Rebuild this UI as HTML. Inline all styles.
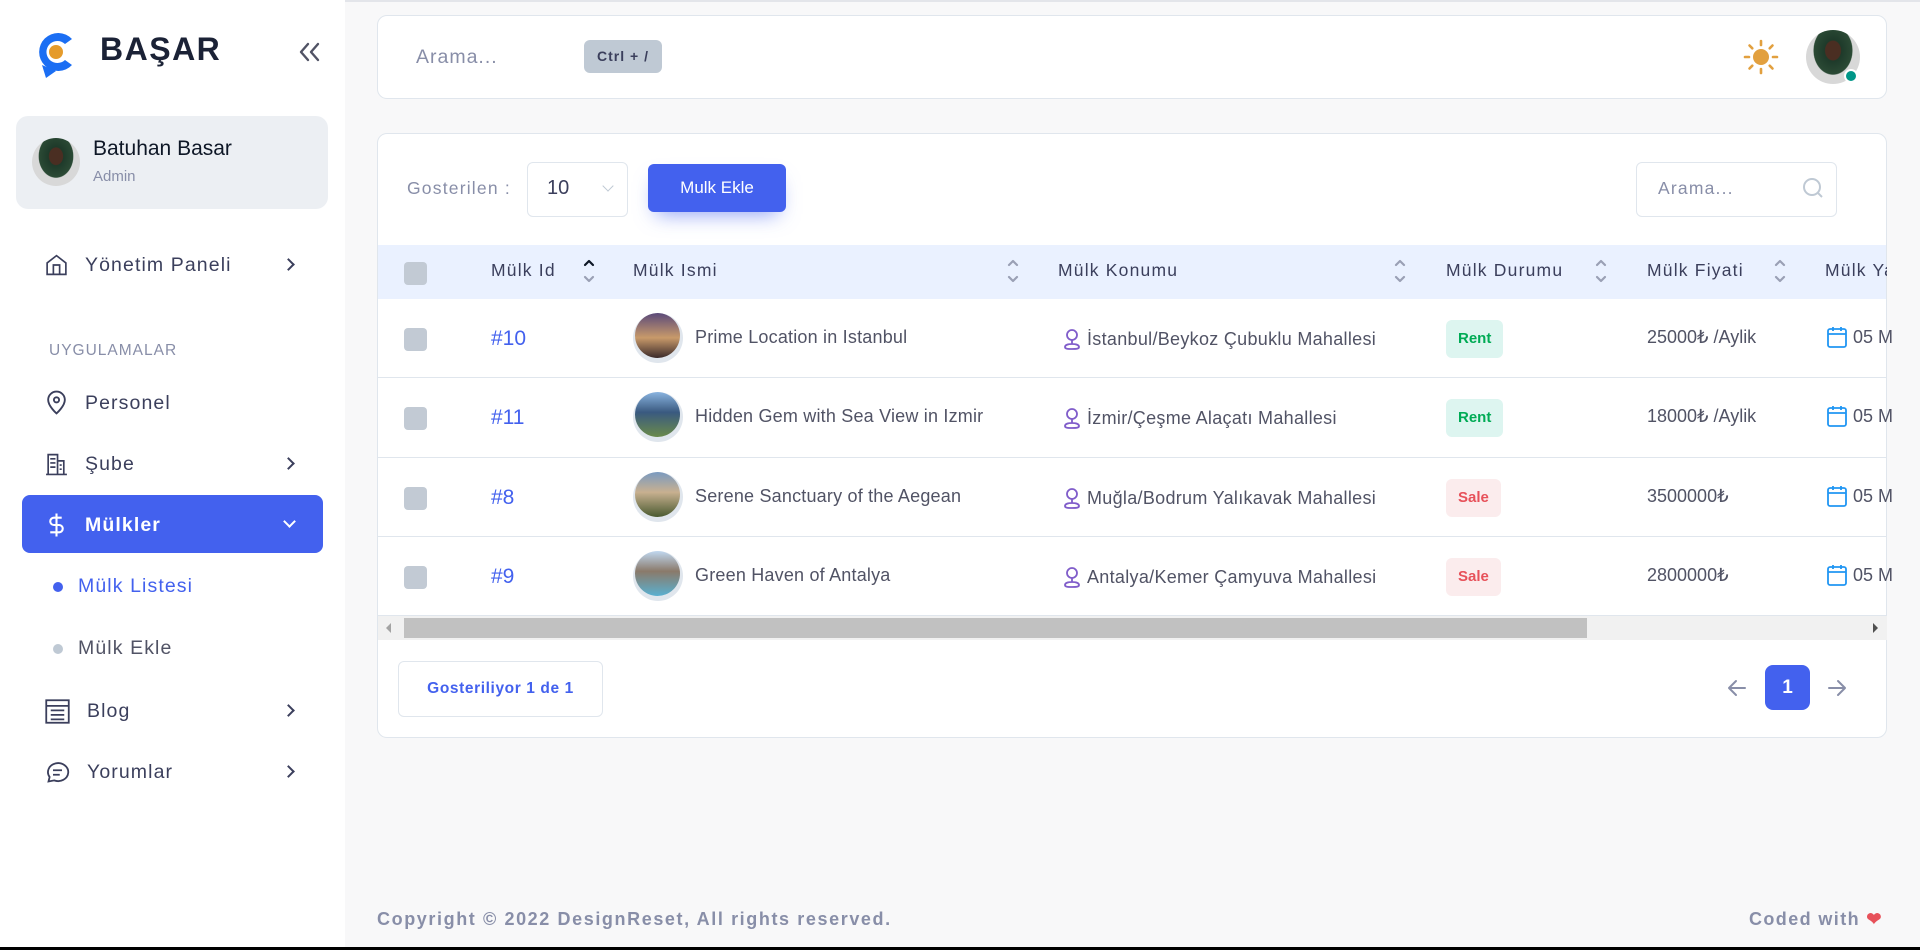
<!DOCTYPE html>
<html><head><meta charset="utf-8"><style>
*{box-sizing:border-box;margin:0;padding:0}
body{width:1920px;height:950px;overflow:hidden;background:#f8f8f9;font-family:"Liberation Sans",sans-serif;position:relative;color:#3b3f5c}
.a{position:absolute}
.sb{left:0;top:0;width:345px;height:950px;background:#fff}
.mi{position:absolute;left:44px;font-size:19.5px;letter-spacing:1.1px;color:#3b3f5c;display:flex;align-items:center}
.mi svg{margin-right:16px}
.chev{position:absolute;left:284px;width:9px;height:9px;border-right:2px solid #3b3f5c;border-top:2px solid #3b3f5c;transform:rotate(45deg)}
.card{background:#fff;border:1px solid #e0e6ed;border-radius:10px}
.th{font-size:17.5px;letter-spacing:1.2px;color:#3b3f5c;top:260px}
.srt{position:absolute;top:256px}
.cb{width:23px;height:23px;background:#c2cad4;border-radius:4px;left:404px}
.id{left:491px;font-size:21px;color:#4361ee}
.nm{left:695px;font-size:18px;color:#515365;letter-spacing:.2px}
.loc{left:1060px;font-size:18px;color:#515365;display:flex;align-items:center;letter-spacing:.3px}
.pr{left:1647px;font-size:18px;color:#515365}
.img{left:633px;width:50px;height:50px;border-radius:50%;background:#e0e6ed;overflow:hidden}
.img div{width:45px;height:45px;border-radius:50%;margin:0 2px}
.badge{left:1446px;height:38px;border-radius:6px;padding:0 12px;font-size:15px;font-weight:bold;line-height:38px}
.rent{background:#ddf5f0;color:#00ab55}
.sale{background:#fbeced;color:#e7515a}
.rb{left:378px;width:1509px;height:1px;background:#e0e6ed}
.cal{left:1827px;font-size:18px;color:#515365;display:flex;align-items:center}
</style></head><body>
<div class="a" style="left:0;top:0;width:1920px;height:2px;background:#e3e5ea"></div>
<div class="a sb">
 <svg class="a" style="left:32px;top:27px" width="46" height="52" viewBox="0 0 46 52"><path d="M40 12 A19 19 0 1 0 40 38 L33 33 A11 11 0 1 1 33 17 Z" fill="#1b6ef3"/><path d="M10 38 L14 51 L24 44 Z" fill="#1b6ef3"/><circle cx="24" cy="25" r="7" fill="#e59b2b"/></svg>
 <div class="a" style="left:100px;top:31px;font-size:32px;font-weight:bold;letter-spacing:1.5px;color:#1b2236">BAŞAR</div>
 <svg class="a" style="left:298px;top:42px" width="24" height="20" viewBox="0 0 24 20" fill="none" stroke="#515365" stroke-width="2.4" stroke-linecap="round" stroke-linejoin="round"><path d="M10 2L3 10l7 8M20 2l-7 8 7 8"/></svg>
 <div class="a" style="left:16px;top:116px;width:312px;height:93px;background:#eceff3;border-radius:12px"></div>
 <div class="a" style="left:32px;top:138px;width:48px;height:48px;border-radius:50%;background:radial-gradient(ellipse at 50% 38%,#4a2e22 0 20%,#1e3a2a 22%,#2b4a35 50%,#d8d8d8 52%)"></div>
 <div class="a" style="left:93px;top:137px;font-size:21px;color:#0e1726">Batuhan Basar</div>
 <div class="a" style="left:93px;top:168px;font-size:15px;color:#888ea8">Admin</div>
 <div class="mi" style="top:252px"><svg width="25" height="26" viewBox="0 0 24 24" fill="none" stroke="#3b3f5c" stroke-width="1.6"><path d="M3 10l9-7 9 7v11H3z"/><path d="M9 21v-9h6v9"/></svg>Yönetim Paneli</div>
 <div class="chev" style="top:260px"></div>
 <div class="a" style="left:49px;top:342px;font-size:15.5px;letter-spacing:1px;color:#888ea8">UYGULAMALAR</div>
 <div class="mi" style="top:390px"><svg width="25" height="26" viewBox="0 0 24 24" fill="none" stroke="#3b3f5c" stroke-width="1.8"><path d="M12 22s-8-7-8-13a8 8 0 0 1 16 0c0 6-8 13-8 13z"/><circle cx="12" cy="9" r="2.5"/></svg>Personel</div>
 <div class="mi" style="top:451px"><svg width="25" height="26" viewBox="0 0 24 24" fill="none" stroke="#3b3f5c" stroke-width="1.6"><path d="M2 22h20M4 22V3h9v19M13 9h6v13M6 7h5M6 11h5M6 15h5M15 13h2M15 17h2"/></svg>Şube</div>
 <div class="chev" style="top:459px"></div>
 <div class="a" style="left:22px;top:495px;width:301px;height:58px;background:#4361ee;border-radius:8px"></div>
 <div class="mi" style="top:511px;color:#fff;font-weight:bold"><svg width="25" height="28" viewBox="0 0 24 24" fill="none" stroke="#fff" stroke-width="2"><path d="M12 1v22M17 5H9.5a3.5 3.5 0 0 0 0 7h5a3.5 3.5 0 0 1 0 7H6"/></svg>Mülkler</div>
 <div class="a" style="left:285px;top:517px;width:9px;height:9px;border-right:2px solid #fff;border-bottom:2px solid #fff;transform:rotate(45deg)"></div>
 <div class="a" style="left:53px;top:582px;width:10px;height:10px;border-radius:50%;background:#4361ee"></div>
 <div class="a" style="left:78px;top:575px;font-size:19.5px;letter-spacing:1.1px;color:#4361ee">Mülk Listesi</div>
 <div class="a" style="left:53px;top:644px;width:10px;height:10px;border-radius:50%;background:#bfc9d4"></div>
 <div class="a" style="left:78px;top:637px;font-size:19.5px;letter-spacing:1.1px;color:#515365">Mülk Ekle</div>
 <div class="mi" style="top:698px"><svg width="27" height="27" viewBox="0 0 24 24" fill="none" stroke="#3b3f5c" stroke-width="1.6"><rect x="2" y="2" width="20" height="20"/><path d="M2 7h20M6 11h12M6 15h12M6 19h12"/></svg>Blog</div>
 <div class="chev" style="top:706px"></div>
 <div class="mi" style="top:759px"><svg width="27" height="27" viewBox="0 0 24 24" fill="none" stroke="#3b3f5c" stroke-width="1.6"><path d="M4 20l1-4A9 8 0 1 1 9 19z"/><path d="M8 10h8M8 14h6"/></svg>Yorumlar</div>
 <div class="chev" style="top:767px"></div>
</div>
<!-- header -->
<div class="a card" style="left:377px;top:15px;width:1510px;height:84px"></div>
<div class="a" style="left:416px;top:46px;font-size:19.5px;letter-spacing:1px;color:#888ea8">Arama...</div>
<div class="a" style="left:584px;top:40px;width:78px;height:33px;background:#bfc9d4;border-radius:6px;font-size:14px;font-weight:bold;color:#3b3f5c;line-height:33px;text-align:center;letter-spacing:1px">Ctrl + /</div>
<svg class="a" style="left:1743px;top:39px" width="36" height="36" viewBox="0 0 36 36"><circle cx="18" cy="18" r="8" fill="#e2a03f"/><g stroke="#e2a03f" stroke-width="2.6" stroke-linecap="round"><path d="M18 2v4M18 30v4M2 18h4M30 18h4M6.5 6.5l2.8 2.8M26.7 26.7l2.8 2.8M6.5 29.5l2.8-2.8M26.7 9.3l2.8-2.8"/></g></svg>
<div class="a" style="left:1806px;top:30px;width:54px;height:54px;border-radius:50%;background:radial-gradient(ellipse at 50% 38%,#4a2e22 0 20%,#1e3a2a 22%,#2b4a35 50%,#d8d8d8 52%)"></div>
<div class="a" style="left:1844px;top:69px;width:14px;height:14px;border-radius:50%;background:#009688;border:2px solid #fff"></div>
<!-- table card -->
<div class="a card" style="left:377px;top:133px;width:1510px;height:605px;overflow:hidden">
 <div class="a" style="left:0;top:111px;width:1510px;height:54px;background:#eaf1ff"></div>
</div>
<div class="a" style="left:407px;top:178px;font-size:17.5px;letter-spacing:1.2px;color:#888ea8">Gosterilen :</div>
<div class="a" style="left:527px;top:162px;width:101px;height:55px;border:1px solid #e0e6ed;border-radius:6px"></div>
<div class="a" style="left:547px;top:177px;font-size:20px;color:#3b3f5c">10</div>
<div class="a" style="left:604px;top:182px;width:8px;height:8px;border-right:1px solid #bfc9d4;border-bottom:1px solid #bfc9d4;transform:rotate(45deg)"></div>
<div class="a" style="left:648px;top:164px;width:138px;height:48px;background:#4361ee;border-radius:6px;color:#fff;font-size:17px;line-height:48px;text-align:center;box-shadow:0 10px 20px -8px rgba(67,97,238,.6)">Mulk Ekle</div>
<div class="a" style="left:1636px;top:162px;width:201px;height:55px;border:1px solid #e0e6ed;border-radius:6px"></div>
<div class="a" style="left:1658px;top:178px;font-size:17.5px;letter-spacing:1.2px;color:#888ea8">Arama...</div>
<svg class="a" style="left:1801px;top:176px" width="24" height="24" viewBox="0 0 24 24" fill="none" stroke="#bfc9d4" stroke-width="2"><circle cx="11" cy="11" r="8"/><path d="M21 21l-4.3-4.3"/></svg>
<div class="a cb" style="top:262px"></div>
<div class="a th" style="left:491px">Mülk Id</div>
<svg class="srt" style="left:582px" width="14" height="30" viewBox="0 0 14 30" fill="none" stroke-width="2.2" stroke-linecap="round" stroke-linejoin="round"><path d="M3 9l4-4 4 4" stroke="#0e1726"/><path d="M3 21l4 4 4-4" stroke="#9aa0b5"/></svg>
<div class="a th" style="left:633px">Mülk Ismi</div>
<svg class="srt" style="left:1006px" width="14" height="30" viewBox="0 0 14 30" fill="none" stroke="#9aa0b5" stroke-width="2.2" stroke-linecap="round" stroke-linejoin="round"><path d="M3 9l4-4 4 4M3 21l4 4 4-4"/></svg>
<div class="a th" style="left:1058px">Mülk Konumu</div>
<svg class="srt" style="left:1393px" width="14" height="30" viewBox="0 0 14 30" fill="none" stroke="#9aa0b5" stroke-width="2.2" stroke-linecap="round" stroke-linejoin="round"><path d="M3 9l4-4 4 4M3 21l4 4 4-4"/></svg>
<div class="a th" style="left:1446px">Mülk Durumu</div>
<svg class="srt" style="left:1594px" width="14" height="30" viewBox="0 0 14 30" fill="none" stroke="#9aa0b5" stroke-width="2.2" stroke-linecap="round" stroke-linejoin="round"><path d="M3 9l4-4 4 4M3 21l4 4 4-4"/></svg>
<div class="a th" style="left:1647px">Mülk Fiyati</div>
<svg class="srt" style="left:1773px" width="14" height="30" viewBox="0 0 14 30" fill="none" stroke="#9aa0b5" stroke-width="2.2" stroke-linecap="round" stroke-linejoin="round"><path d="M3 9l4-4 4 4M3 21l4 4 4-4"/></svg>
<div class="a th" style="left:1825px;width:62px;overflow:hidden;white-space:nowrap">Mülk Yayın</div>

<!-- rows -->
<div class="a cb" style="top:328px"></div><div class="a id" style="top:327px">#10</div>
<div class="a img" style="top:313px"><div style="background:linear-gradient(#5b4a7a,#c89a6a 55%,#3a2a2a)"></div></div>
<div class="a nm" style="top:327px">Prime Location in Istanbul</div>
<div class="a loc" style="top:327px"><svg width="24" height="24" viewBox="0 0 24 24" fill="none" stroke="#805dca" stroke-width="1.8"><circle cx="12" cy="8" r="5"/><path d="M12 13v4M5 20c0-2 3-3 7-3s7 1 7 3-3 2-7 2-7 0-7-2z"/></svg><span style="margin-left:3px">İstanbul/Beykoz Çubuklu Mahallesi</span></div>
<div class="a badge rent" style="top:320px">Rent</div>
<div class="a pr" style="top:327px">25000₺ /Aylik</div>
<div class="a cal" style="top:326px"><svg width="20" height="22" viewBox="0 0 20 22" fill="none" stroke="#2196f3" stroke-width="1.8"><rect x="1" y="3" width="18" height="18" rx="2"/><path d="M1 8h18M6 1v4M14 1v4"/></svg><span style="margin-left:6px">05 M</span></div>
<div class="a rb" style="top:377px"></div>

<div class="a cb" style="top:407px"></div><div class="a id" style="top:406px">#11</div>
<div class="a img" style="top:392px"><div style="background:linear-gradient(#8ab4e0,#3a5a80 45%,#6a8a4a)"></div></div>
<div class="a nm" style="top:406px">Hidden Gem with Sea View in Izmir</div>
<div class="a loc" style="top:406px"><svg width="24" height="24" viewBox="0 0 24 24" fill="none" stroke="#805dca" stroke-width="1.8"><circle cx="12" cy="8" r="5"/><path d="M12 13v4M5 20c0-2 3-3 7-3s7 1 7 3-3 2-7 2-7 0-7-2z"/></svg><span style="margin-left:3px">İzmir/Çeşme Alaçatı Mahallesi</span></div>
<div class="a badge rent" style="top:399px">Rent</div>
<div class="a pr" style="top:406px">18000₺ /Aylik</div>
<div class="a cal" style="top:405px"><svg width="20" height="22" viewBox="0 0 20 22" fill="none" stroke="#2196f3" stroke-width="1.8"><rect x="1" y="3" width="18" height="18" rx="2"/><path d="M1 8h18M6 1v4M14 1v4"/></svg><span style="margin-left:6px">05 M</span></div>
<div class="a rb" style="top:457px"></div>

<div class="a cb" style="top:487px"></div><div class="a id" style="top:486px">#8</div>
<div class="a img" style="top:472px"><div style="background:linear-gradient(#7a9ac0,#c8b090 45%,#4a5a30)"></div></div>
<div class="a nm" style="top:486px">Serene Sanctuary of the Aegean</div>
<div class="a loc" style="top:486px"><svg width="24" height="24" viewBox="0 0 24 24" fill="none" stroke="#805dca" stroke-width="1.8"><circle cx="12" cy="8" r="5"/><path d="M12 13v4M5 20c0-2 3-3 7-3s7 1 7 3-3 2-7 2-7 0-7-2z"/></svg><span style="margin-left:3px">Muğla/Bodrum Yalıkavak Mahallesi</span></div>
<div class="a badge sale" style="top:479px">Sale</div>
<div class="a pr" style="top:486px">3500000₺</div>
<div class="a cal" style="top:485px"><svg width="20" height="22" viewBox="0 0 20 22" fill="none" stroke="#2196f3" stroke-width="1.8"><rect x="1" y="3" width="18" height="18" rx="2"/><path d="M1 8h18M6 1v4M14 1v4"/></svg><span style="margin-left:6px">05 M</span></div>
<div class="a rb" style="top:536px"></div>

<div class="a cb" style="top:566px"></div><div class="a id" style="top:565px">#9</div>
<div class="a img" style="top:551px"><div style="background:linear-gradient(#c0d8f0,#8a7a6a 45%,#5ab0d0)"></div></div>
<div class="a nm" style="top:565px">Green Haven of Antalya</div>
<div class="a loc" style="top:565px"><svg width="24" height="24" viewBox="0 0 24 24" fill="none" stroke="#805dca" stroke-width="1.8"><circle cx="12" cy="8" r="5"/><path d="M12 13v4M5 20c0-2 3-3 7-3s7 1 7 3-3 2-7 2-7 0-7-2z"/></svg><span style="margin-left:3px">Antalya/Kemer Çamyuva Mahallesi</span></div>
<div class="a badge sale" style="top:558px">Sale</div>
<div class="a pr" style="top:565px">2800000₺</div>
<div class="a cal" style="top:564px"><svg width="20" height="22" viewBox="0 0 20 22" fill="none" stroke="#2196f3" stroke-width="1.8"><rect x="1" y="3" width="18" height="18" rx="2"/><path d="M1 8h18M6 1v4M14 1v4"/></svg><span style="margin-left:6px">05 M</span></div>
<div class="a rb" style="top:615px"></div>

<!-- scrollbar -->
<div class="a" style="left:378px;top:616px;width:1509px;height:24px;background:#f1f1f1"></div>
<div class="a" style="left:404px;top:618px;width:1183px;height:20px;background:#c1c1c1"></div>
<div class="a" style="left:386px;top:623px;width:0;height:0;border-top:5px solid transparent;border-bottom:5px solid transparent;border-right:5px solid #a3a3a3"></div>
<div class="a" style="left:1873px;top:623px;width:0;height:0;border-top:5px solid transparent;border-bottom:5px solid transparent;border-left:5px solid #505050"></div>

<div class="a" style="left:398px;top:661px;width:205px;height:56px;border:1px solid #e0e6ed;border-radius:6px;color:#4361ee;font-size:15.5px;font-weight:bold;line-height:54px;text-align:center;letter-spacing:.6px">Gosteriliyor 1 de 1</div>
<svg class="a" style="left:1726px;top:677px" width="22" height="22" viewBox="0 0 22 22" fill="none" stroke="#888ea8" stroke-width="2" stroke-linecap="round" stroke-linejoin="round"><path d="M19 11H3M10 4l-7 7 7 7"/></svg>
<div class="a" style="left:1765px;top:665px;width:45px;height:45px;background:#4361ee;border-radius:8px;color:#fff;font-size:19px;font-weight:bold;line-height:45px;text-align:center">1</div>
<svg class="a" style="left:1826px;top:677px" width="22" height="22" viewBox="0 0 22 22" fill="none" stroke="#888ea8" stroke-width="2" stroke-linecap="round" stroke-linejoin="round"><path d="M3 11h16M12 4l7 7-7 7"/></svg>

<div class="a" style="left:377px;top:909px;font-size:18px;font-weight:bold;letter-spacing:1.6px;color:#888ea8;white-space:nowrap">Copyright © 2022 DesignReset, All rights reserved.</div>
<div class="a" style="left:1749px;top:909px;font-size:18px;font-weight:bold;letter-spacing:1.4px;color:#888ea8;white-space:nowrap">Coded with <span style="color:#e7515a">❤</span></div>
<div class="a" style="left:0;top:947px;width:1920px;height:3px;background:#000"></div>
</body></html>
